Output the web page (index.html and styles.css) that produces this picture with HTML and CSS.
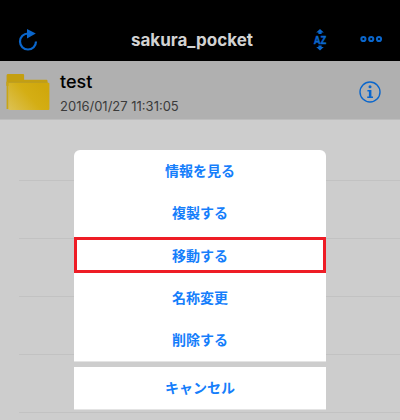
FILE: index.html
```html
<!DOCTYPE html>
<html lang="ja">
<head>
<meta charset="utf-8">
<title>sakura_pocket</title>
<link rel="stylesheet" href="styles.css">
</head>
<body>
<div class="app">
  <header class="nav">
    <svg class="nav-refresh" width="24" height="24" viewBox="0 0 24 24">
      <path d="M11 4.5 A8 8 0 1 0 19 12.5" fill="none" stroke="#0a66cc" stroke-width="2.2"/>
      <path d="M10 0 L18.8 4.6 L10 9.4 Z" fill="#0a66cc"/>
    </svg>
    <div class="nav-title">sakura_pocket</div>
    <svg class="nav-sort" width="18" height="22" viewBox="0 0 18 22">
      <path d="M9 0 L12.8 3.6 H10.6 V5 H7.4 V3.6 H5.2 Z M9 21.5 L12.8 18 H10.6 V16.6 H7.4 V18 H5.2 Z" fill="#0a66cc"/>
      <text x="9" y="14.6" text-anchor="middle" textLength="12.6" lengthAdjust="spacingAndGlyphs" class="az">AZ</text>
    </svg>
    <svg class="nav-more" width="23" height="8" viewBox="0 0 23 8">
      <circle cx="3.4" cy="4" r="2.1" fill="none" stroke="#0a66cc" stroke-width="2"/>
      <circle cx="11.2" cy="4" r="2.1" fill="none" stroke="#0a66cc" stroke-width="2"/>
      <circle cx="19" cy="4" r="2.1" fill="none" stroke="#0a66cc" stroke-width="2"/>
    </svg>
  </header>
  <section class="row">
    <svg class="folder" width="44" height="37" viewBox="0 0 44 38">
      <defs>
        <linearGradient id="fg" x1="0" y1="1" x2="1" y2="0.4">
          <stop offset="0" stop-color="#dcc154"/>
          <stop offset="0.6" stop-color="#d4ae14"/>
          <stop offset="1" stop-color="#d0a80c"/>
        </linearGradient>
      </defs>
      <path d="M0 1.5 Q0 0 1.5 0 H17 Q18 0 18 1 V6 H41 Q42 6 42 7 V12 H0 Z" fill="#c49f10"/>
      <path d="M0 8 H42 V12 H0 Z" fill="#b89a24"/>
      <path d="M0 36 V8 H2 V36 Z" fill="#c9a516"/>
      <path d="M3 9 H43 Q44 9 44 10 V36 Q44 37 43 37 H3 Q2 37 2 36 V10 Q2 9 3 9 Z" fill="url(#fg)"/>
    </svg>
    <div class="row-text">
      <div class="row-name">test</div>
      <div class="row-date">2016/01/27 11:31:05</div>
    </div>
    <svg class="info" width="22" height="22" viewBox="0 0 22 22">
      <circle cx="11" cy="11" r="10" fill="none" stroke="#0a66cc" stroke-width="1.4"/>
      <circle cx="11" cy="5.8" r="1.5" fill="#0a66cc"/>
      <path d="M8.4 9 H12.4 V15.6 H14 V17 H8.2 V15.6 H9.9 V10.4 H8.4 Z" fill="#0a66cc"/>
    </svg>
  </section>
  <div class="list">
    <div class="list-line"></div>
    <div class="list-line"></div>
    <div class="list-line"></div>
    <div class="list-line"></div>
    <div class="list-line"></div>
  </div>
  <div class="sheet">
    <div class="menu">
      <div class="menu-item">情報を見る</div>
      <div class="menu-item">複製する</div>
      <div class="menu-item menu-item-marked">移動する</div>
      <div class="menu-item">名称変更</div>
      <div class="menu-item">削除する</div>
    </div>
    <div class="cancel">キャンセル</div>
  </div>
</div>
</body>
</html>
```
FILE: styles.css
```css
* { box-sizing: border-box; }
html, body { margin: 0; padding: 0; }
body { width: 400px; height: 420px; overflow: hidden; background: #cdcdcd; font-family: "Inter", "Liberation Sans", "Noto Sans CJK JP", sans-serif; }
.app { position: relative; width: 400px; height: 420px; }
.nav { height: 61px; background: #000; display: flex; align-items: center; position: relative; }
.nav-refresh { position: absolute; left: 17px; top: 29px; }
.nav-title { width: 100%; text-align: center; padding-top: 19px; padding-right: 16px; color: #d2d2d2; font: 700 17px "Inter", "Liberation Sans", sans-serif; }
.nav-sort { position: absolute; left: 311px; top: 29px; }
.az { font: 700 11.5px "Liberation Sans", sans-serif; fill: #0a66cc; stroke: #0a66cc; stroke-width: 0.5; }
.nav-more { position: absolute; left: 360px; top: 35px; }
.row { height: 59px; background: #b0b0b0; border-bottom: 1px solid #bdbdbd; display: flex; align-items: flex-start; padding: 13px 0 0 6px; }
.row-text { margin-left: 10px; margin-top: -2px; }
.row-name { font: 500 18px/20px "Inter", "Liberation Sans", sans-serif; color: #000; }
.row-date { font: 400 13px/14px "Inter", "Liberation Sans", sans-serif; color: #3b3b3b; margin-top: 7px; }
.info { margin-left: auto; margin-right: 19px; margin-top: 7px; }
.list { padding-top: 60px; padding-left: 19px; }
.list-line { height: 1px; background: #c2c2c2; margin-bottom: 57px; }
.sheet { position: absolute; left: 74px; top: 150px; width: 252px; display: flex; flex-direction: column; gap: 5px; }
.menu { background: #fff; border-radius: 6px 6px 0 0; height: 212px; display: flex; flex-direction: column; border-bottom: 1px solid #e4e4e4; }
.menu-item { flex: 1; display: flex; align-items: center; justify-content: center; padding-bottom: 2px; color: #157efb; font: 700 14px "Noto Sans CJK JP", sans-serif; }
.menu-item-marked { position: relative; }
.menu-item-marked::after { content: ""; box-sizing: border-box; position: absolute; left: 0; right: 0; top: 3px; height: 36px; border: 3px solid #ee1c25; }
.cancel { height: 43px; background: #fff; display: flex; align-items: center; justify-content: center; padding-bottom: 2px; color: #157efb; font: 700 14px "Noto Sans CJK JP", sans-serif; border-bottom: 1px solid #e4e4e4; }
```
